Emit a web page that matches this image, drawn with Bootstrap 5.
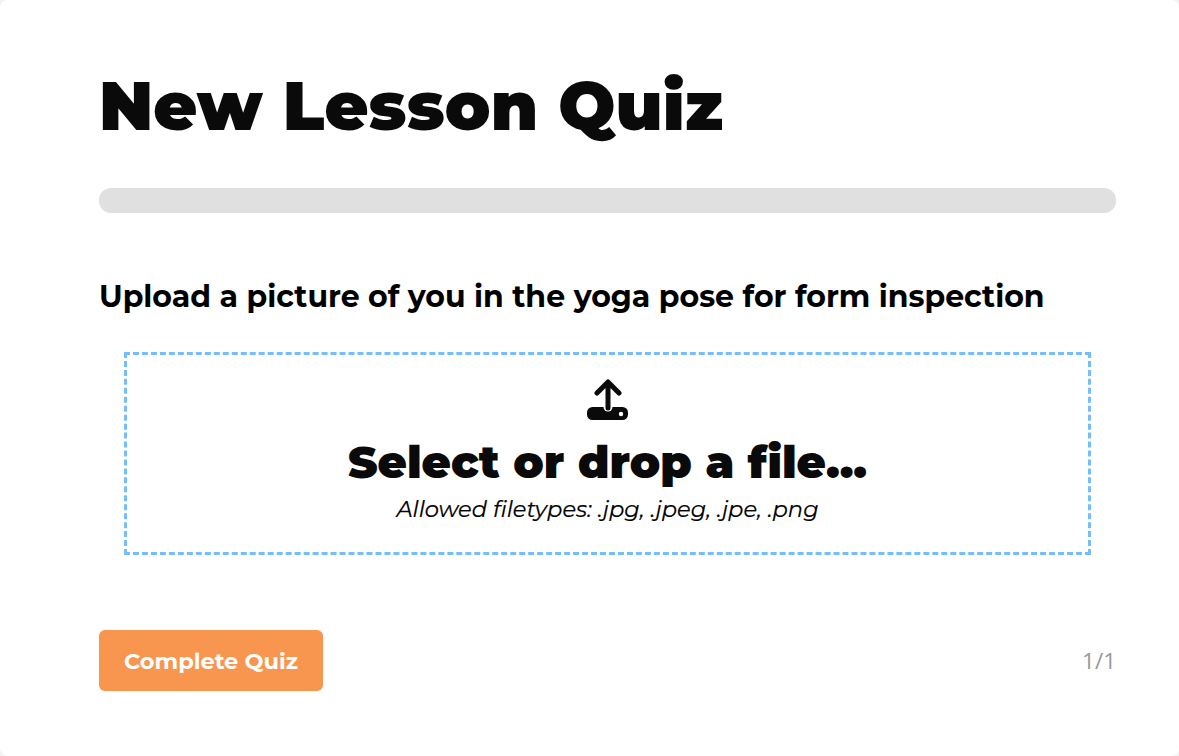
<!DOCTYPE html>
<html lang="en"><head><meta charset="utf-8">
<link href="https://cdn.jsdelivr.net/npm/bootstrap@5.3.0/dist/css/bootstrap.min.css" rel="stylesheet">
<style>
html,body{height:100%}
body{background:#f2f2f2;font-family:"Liberation Sans",sans-serif;overflow:hidden}
.quiz-sheet{background:#fff;height:756px;border-radius:8px;padding:64px 63px 0 99px}
.quiz-title{font-family:Montserrat,Inter,"Open Sans",sans-serif;font-weight:900;font-size:67.5px;line-height:85px;color:#0a0a0a;margin:0 0 39px}
.quiz-track{height:25px;background:#e0e0e0;border-radius:12px}
.quiz-q{font-family:Montserrat,Inter,"Open Sans",sans-serif;font-weight:700;font-size:30px;line-height:36px;margin:66px 0 37px;color:#000}
.drop-zone{margin:0 25px;height:203px;border:3px dashed #78bdfb;text-align:center;padding-top:24px}
.drop-icon{display:block;margin:0 auto 14px}
.drop-main{font-family:Montserrat,Inter,"Open Sans",sans-serif;font-weight:900;font-size:45px;line-height:56px;color:#0a0a0a}
.drop-sub{font-family:Montserrat,Inter,"Open Sans",sans-serif;font-style:italic;font-weight:400;font-size:22.6px;line-height:32px;margin-top:3px;color:#000;-webkit-text-stroke:.2px #000}
.quiz-foot{margin-top:75px}
.done-btn{background:#f89650;color:#fff;font-family:Montserrat,Inter,"Open Sans",sans-serif;font-weight:700;font-size:22.5px;border:0;border-radius:6px;width:224px;height:61px;padding-top:8px}
.page-count{font-family:"Open Sans",sans-serif;font-size:22.5px;color:#999}
</style></head><body>
<div class="quiz-sheet">
<h1 class="quiz-title">New Lesson Quiz</h1>
<div class="quiz-track"></div>
<p class="quiz-q">Upload a picture of you in the yoga pose for form inspection</p>
<div class="drop-zone">
<svg class="drop-icon" width="41" height="41" viewBox="0 0 41 41" aria-hidden="true"><rect x="0" y="28" width="41" height="13" rx="5.5" fill="#0a0a0a"/><path d="M21 6 V28" stroke="#fff" stroke-width="9" stroke-linecap="round"/><path d="M21 3 L10 14 M21 3 L32 14 M21 3 V29" stroke="#0a0a0a" stroke-width="5" fill="none" stroke-linecap="round" stroke-linejoin="round"/><circle cx="34" cy="35" r="2.2" fill="#fff"/></svg>
<div class="drop-main">Select or drop a file...</div>
<div class="drop-sub">Allowed filetypes: .jpg, .jpeg, .jpe, .png</div>
</div>
<div class="quiz-foot d-flex justify-content-between align-items-center">
<button class="btn done-btn">Complete Quiz</button>
<span class="page-count">1/1</span>
</div>
</div>
<script src="https://cdn.jsdelivr.net/npm/bootstrap@5.3.0/dist/js/bootstrap.bundle.min.js"></script>
</body></html>
